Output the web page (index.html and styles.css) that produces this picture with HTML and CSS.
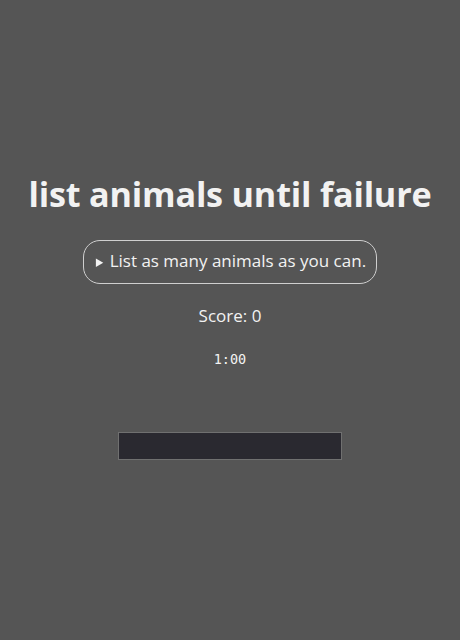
FILE: index.html
```html
<!DOCTYPE html>
<html lang="en">
<head>
    <meta charset="UTF-8">
    <meta name="viewport" content="width=device-width, initial-scale=1.0">
    <title>list animals until failure</title>
    <link rel="stylesheet" href="styles.css">
</head>
<body>
    <main>
        <h1>list animals until failure</h1>
        <details class="rules">
            <summary>List as many animals as you can.</summary>
        </details>
        <p class="score">Score: 0</p>
        <p class="timer">1:00</p>
        <input type="text" class="answer" aria-label="animal">
    </main>
</body>
</html>
```

FILE: styles.css
```css
* {
    margin: 0;
    padding: 0;
    box-sizing: border-box;
}
body {
    background-color: #555555;
    color: #f2f2f2;
    font-family: "Open Sans", "Noto Sans", sans-serif;
    height: 100vh;
}
main {
    display: flex;
    flex-direction: column;
    align-items: center;
    padding-top: 170px;
}
h1 {
    font-size: 34.2px;
    font-weight: 700;
    letter-spacing: -0.2px;
    line-height: 48px;
}
.rules {
    margin-top: 22px;
    border: 1px solid #cfcfcf;
    border-radius: 17px;
    padding: 9px 10px 10px 12px;
}
summary {
    font-size: 17px;
    line-height: 22px;
    cursor: pointer;
}
summary::marker {
    font-size: 13px;
}
.score {
    margin-top: 20px;
    font-size: 17px;
    line-height: 24px;
}
.timer {
    margin-top: 23px;
    font-family: "DejaVu Sans Mono", monospace;
    font-size: 13.5px;
    line-height: 16px;
}
.answer {
    margin-top: 65px;
    width: 224px;
    height: 28px;
    background-color: #2a2930;
    border: 1px solid #707070;
    color: #f2f2f2;
    outline: none;
}
```
